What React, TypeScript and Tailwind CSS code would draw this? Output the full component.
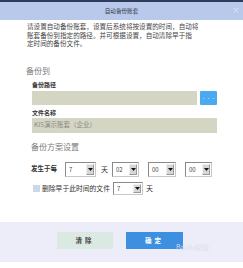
import React from 'react'

const font = '"Noto Sans CJK SC", "Noto Sans", sans-serif'

function Select({ value, width, height = 15 }: { value: string; width: number; height?: number }) {
  return (
    <div
      className="flex bg-white border border-[#8a8a8a] border-r-[#c8c8c8] border-b-[#c8c8c8]"
      style={{ width, height }}
    >
      <div className="flex-1 pl-[3px] flex items-center text-[6px] text-[#444]">{value}</div>
      <div className="w-[8px] m-[1px] bg-[#d6d6d6] border border-[#efefef] border-r-[#999] border-b-[#999] flex items-center justify-center">
        <svg width="5" height="3" viewBox="0 0 5 3">
          <path d="M0 0 L5 0 L2.5 3 Z" fill="#111" />
        </svg>
      </div>
    </div>
  )
}

export default function App() {
  return (
    <div className="w-[243px] h-[268px] bg-white flex flex-col overflow-hidden" style={{ fontFamily: font }}>
      <div className="h-[2px] bg-[#2f3d5c]" />

      {/* Title bar */}
      <div className="h-[18px] bg-[#b9c9eb] relative flex items-center justify-center">
        <span className="text-[5.6px] text-[#3a3a4a]">自动备份账套</span>
        <span className="absolute right-[3px] top-[4px] text-[8px] leading-[8px] text-[#dfe6f5]">×</span>
      </div>

      {/* Description */}
      <div className="pl-[27px] pt-[2px] text-[6.6px] leading-[8.5px] text-[#444] whitespace-nowrap">
        <div>请设置自动备份账套，设置后系统将按设置的时间，自动将</div>
        <div>账套备份到指定的路径。并可根据设置，自动清除早于指</div>
        <div>定时间的备份文件。</div>
      </div>

      <div className="mt-[18px] pl-[26px] text-[8px] leading-[10px] text-[#7a7a7a]">备份到</div>

      <div className="pl-[32px] pr-[26px]">
        <div className="mt-[5px] text-[6px] leading-[8px] font-bold text-[#333]">备份路径</div>
        <div className="mt-[2px] flex gap-[3px]">
          <div className="w-[165px] h-[14px] bg-[#d5d5c4]" />
          <div className="w-[17px] h-[14px] bg-[#4aa9f1] rounded-[1px] flex items-center justify-center text-[5px] text-[#bfe0fb]">
            ···
          </div>
        </div>
        <div className="mt-[4px] text-[6px] leading-[8px] font-bold text-[#333]">文件名称</div>
        <div className="mt-[1px] h-[15px] bg-[#d5d5c4] flex items-center pl-[2px] text-[6.5px] text-[#8a8a84] whitespace-nowrap">
          KIS演示账套（企业）
        </div>
      </div>

      <div className="mt-[9.5px] pl-[31px] text-[8px] leading-[10px] text-[#7a7a7a]">备份方案设置</div>

      {/* Schedule row */}
      <div className="mt-[9.5px] flex items-center pl-[31px] h-[15px]">
        <span className="w-[34px] text-[6.5px] font-bold text-[#333] whitespace-nowrap">发生于每</span>
        <Select value="7" width={31} />
        <span className="ml-[5px] w-[11px] text-[7px] text-[#333]">天</span>
        <Select value="02" width={27} />
        <div className="w-[9px]" />
        <Select value="00" width={28} />
        <div className="w-[9px]" />
        <Select value="00" width={27} />
      </div>

      {/* Delete row */}
      <div className="mt-[5px] flex items-center pl-[33px] h-[13px]">
        <div className="w-[7px] h-[7px] bg-[#c9d9e8]" />
        <span className="ml-[2px] w-[71px] text-[6.8px] text-[#333] whitespace-nowrap">删除早于此时间的文件</span>
        <Select value="7" width={30} height={13} />
        <span className="ml-[3px] text-[7px] text-[#333]">天</span>
      </div>

      <div className="flex-1" />

      {/* Footer */}
      <div className="h-[40px] bg-[#ededf9] relative flex items-start pt-[10px] pl-[57px] gap-[13px]">
        <button className="w-[56px] h-[17px] bg-[#dbe9e3] text-[6.5px] font-bold text-[#444] tracking-[3px]">清除</button>
        <button className="w-[57px] h-[17px] bg-[#3d8fe0] text-[6.5px] font-bold text-white tracking-[3px]">确定</button>
        <span className="absolute left-[176px] top-[20px] text-[7px] text-[#dcdcec] whitespace-nowrap">Baidu经验</span>
      </div>
      <div className="h-[6px]" />
    </div>
  )
}
